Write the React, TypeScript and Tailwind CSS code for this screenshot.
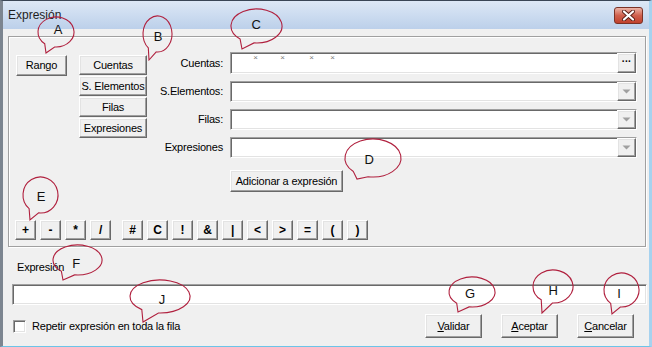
import React from "react";

const btn =
  "bg-[#f0f0f0] border border-t-white border-l-white border-r-[#696969] border-b-[#696969] shadow-[inset_-1px_-1px_0_#a0a0a0,inset_1px_1px_0_#e3e3e3] flex items-center justify-center whitespace-nowrap text-black";
const field =
  "bg-white border border-t-[#a0a0a0] border-l-[#a0a0a0] border-r-white border-b-white shadow-[inset_1px_1px_0_#696969,inset_-1px_-1px_0_#e3e3e3]";

type C = { l: string; cx: number; cy: number; rx: number; ry: number; tx: number; ty: number; lx: number; ly: number };

const callouts: C[] = [
  { l: "A", cx: 56, cy: 32, rx: 18, ry: 15, tx: 46, ty: 53, lx: 58, ly: 29 },
  { l: "B", cx: 157.5, cy: 34, rx: 14.5, ry: 18, tx: 149, ty: 60, lx: 158, ly: 36 },
  { l: "C", cx: 256.5, cy: 26, rx: 25.5, ry: 17, tx: 242, ty: 49, lx: 256, ly: 24 },
  { l: "D", cx: 373, cy: 158, rx: 28, ry: 19, tx: 357, ty: 179, lx: 369, ly: 159 },
  { l: "E", cx: 40.5, cy: 195, rx: 17.5, ry: 18, tx: 30, ty: 220, lx: 41, ly: 196 },
  { l: "F", cx: 77.5, cy: 260, rx: 24.5, ry: 15, tx: 63, ty: 280, lx: 76, ly: 263 },
  { l: "J", cx: 160, cy: 296.5, rx: 30, ry: 16.5, tx: 143, ty: 322, lx: 162, ly: 299 },
  { l: "G", cx: 472, cy: 292, rx: 23, ry: 15, tx: 458, ty: 312, lx: 470, ly: 293 },
  { l: "H", cx: 553, cy: 286.5, rx: 20, ry: 16.5, tx: 542, ty: 313, lx: 553, ly: 290 },
  { l: "I", cx: 621.5, cy: 290, rx: 17.5, ry: 17, tx: 612, ty: 314, lx: 619, ly: 293 },
];

function calloutPath(c: C) {
  const t0 = Math.atan2((c.ty - c.cy) / c.ry, (c.tx - c.cx) / c.rx);
  const s = 0.3;
  const p1 = [c.cx + c.rx * Math.cos(t0 - s), c.cy + c.ry * Math.sin(t0 - s)];
  const p2 = [c.cx + c.rx * Math.cos(t0 + s), c.cy + c.ry * Math.sin(t0 + s)];
  return `M ${p2[0].toFixed(2)} ${p2[1].toFixed(2)} A ${c.rx} ${c.ry} 0 1 1 ${p1[0].toFixed(2)} ${p1[1].toFixed(2)} L ${c.tx} ${c.ty} Z`;
}

function DropBtn() {
  return (
    <div className={btn + " ml-auto w-[19px] h-[19px]"}>
      <svg width="9" height="5" viewBox="0 0 9 5">
        <path d="M0.5 0.5 L8.5 0.5 L4.5 4.5 Z" fill="#a0a0a0" />
      </svg>
    </div>
  );
}

function Row({ label, children, h }: { label: string; children: React.ReactNode; h: string }) {
  return (
    <div className={"flex items-center gap-[7px] " + h}>
      <span className="w-[76px] text-right whitespace-nowrap">{label}</span>
      {children}
    </div>
  );
}

export default function App() {
  const ops1 = ["+", "-", "*", "/"];
  const ops2 = ["#", "C", "!", "&", "|", "<", ">", "=", "(", ")"];
  return (
    <div className="relative w-[652px] h-[347px] overflow-hidden font-['Liberation_Sans',Arial,sans-serif] text-[11px] leading-[13px] tracking-[-0.2px] text-black">
      <div className="w-[652px] h-[347px] flex flex-col bg-[#f0f0f0] border-t border-t-[#3a4656] border-l-[3px] border-l-[#7c8590] border-r-[3px] border-r-[#a6d2ef] border-b border-b-[#6cc4e8]">
        {/* Title bar */}
        <div className="h-[28px] flex items-center justify-between pl-[5px] pr-[6px] bg-gradient-to-b from-[#dde8f6] to-[#bcd0ea]">
          <span className="text-[12px] tracking-normal text-[#1e1e1e]">Expresión</span>
          <div className="w-[29px] h-[17px] rounded-[3px] border border-[#7a3226] bg-gradient-to-b from-[#eab3a7] via-[#d0604d] to-[#c0402c] flex items-center justify-center">
            <svg width="13" height="11" viewBox="0 0 13 11">
              <path d="M2 1.5 L11 9.5 M11 1.5 L2 9.5" stroke="#5a1e16" strokeWidth="4" strokeLinecap="round" />
              <path d="M2 1.5 L11 9.5 M11 1.5 L2 9.5" stroke="#ffffff" strokeWidth="2.2" strokeLinecap="round" />
            </svg>
          </div>
        </div>

        {/* Group box */}
        <div className="mt-[7px] ml-[5px] w-[638px] h-[211px] border border-[#a0a0a0] shadow-[1px_1px_0_#fff,inset_1px_1px_0_#fff] flex flex-col">
          <div className="flex items-start pl-[7px]">
            <div className={btn + " mt-[18px] w-[51px] h-[21px]"}>Rango</div>
            <div className="ml-[12px] mt-[18px] w-[68px] flex flex-col gap-[1px]">
              <div className={btn + " h-[20px]"}>Cuentas</div>
              <div className={btn + " h-[20px]"}>S. Elementos</div>
              <div className={btn + " h-[20px]"}>Filas</div>
              <div className={btn + " h-[20px]"}>Expresiones</div>
            </div>
            <div className="mt-[15px] flex flex-col gap-[7px]">
              <Row label="Cuentas:" h="h-[22px]">
                <div className={field + " w-[407px] h-[22px] flex items-start"}>
                  <div className="flex pt-[1px] text-[8px] leading-[8px] text-[#7a7a7a]">
                    <span className="w-[5px] ml-[22px] text-center">×</span>
                    <span className="w-[5px] ml-[22px] text-center">×</span>
                    <span className="w-[5px] ml-[24px] text-center">×</span>
                    <span className="w-[5px] ml-[16px] text-center">×</span>
                  </div>
                  <div className={btn + " ml-auto w-[19px] h-[20px] font-bold text-[10px] leading-[10px] items-end pb-[5px]"}>
                    ···
                  </div>
                </div>
              </Row>
              <Row label="S.Elementos:" h="h-[21px]">
                <div className={field + " w-[407px] h-[21px] flex items-center"}>
                  <DropBtn />
                </div>
              </Row>
              <Row label="Filas:" h="h-[21px]">
                <div className={field + " w-[407px] h-[21px] flex items-center"}>
                  <DropBtn />
                </div>
              </Row>
              <Row label="Expresiones" h="h-[21px]">
                <div className={field + " w-[407px] h-[21px] flex items-center"}>
                  <DropBtn />
                </div>
              </Row>
              <div className={btn + " mt-[5px] ml-[83px] w-[113px] h-[22px]"}>Adicionar a expresión</div>
            </div>
          </div>

          <div className="flex mt-[28px] pl-[6px] gap-[11px]">
            <div className="flex gap-[4px]">
              {ops1.map((o) => (
                <div key={o} className={btn + " w-[21px] h-[20px] font-bold text-[12px]"}>
                  {o}
                </div>
              ))}
            </div>
            <div className="flex gap-[4px]">
              {ops2.map((o) => (
                <div key={o} className={btn + " w-[21px] h-[20px] font-bold text-[12px]"}>
                  {o}
                </div>
              ))}
            </div>
          </div>
        </div>

        {/* Expression area */}
        <div className="mt-[14px] ml-[14px]">Expresión</div>
        <div className={field + " mt-[10px] ml-[9px] w-[635px] h-[21px]"} />

        <div className="mt-[9px] h-[24px] flex items-center">
          <div className="ml-[10px] w-[13px] h-[13px] bg-white border border-t-[#a0a0a0] border-l-[#a0a0a0] border-r-white border-b-white shadow-[inset_1px_1px_0_#696969,inset_-1px_-1px_0_#e3e3e3]" />
          <span className="ml-[6px]">Repetir expresión en toda la fila</span>
          <div className="ml-auto mr-[15px] flex gap-[19px]">
            <div className={btn + " w-[57px] h-[24px]"}>
              <span><u>V</u>alidar</span>
            </div>
            <div className={btn + " w-[57px] h-[24px]"}>
              <span><u>A</u>ceptar</span>
            </div>
            <div className={btn + " w-[57px] h-[24px]"}>
              <span><u>C</u>ancelar</span>
            </div>
          </div>
        </div>
      </div>

      {/* Callouts overlay */}
      <svg className="absolute left-0 top-0 pointer-events-none" width="652" height="347" viewBox="0 0 652 347">
        {callouts.map((c) => (
          <g key={c.l}>
            <path d={calloutPath(c)} fill="none" stroke="#b0203e" strokeWidth="1.1" />
            <text
              x={c.lx}
              y={c.ly}
              textAnchor="middle"
              dominantBaseline="central"
              fontFamily="Liberation Sans, Arial, sans-serif"
              fontSize="13"
              fill="#111"
            >
              {c.l}
            </text>
          </g>
        ))}
      </svg>
    </div>
  );
}
